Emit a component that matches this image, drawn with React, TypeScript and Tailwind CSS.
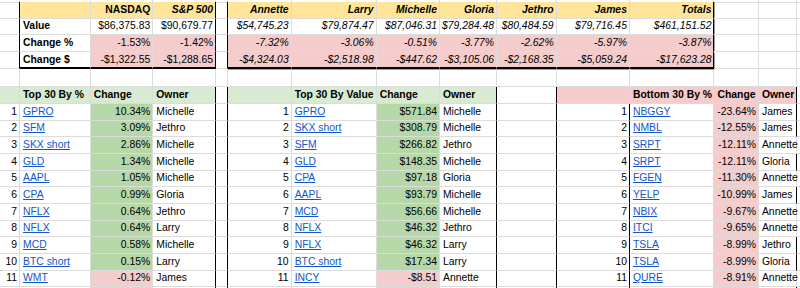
import clsx from "clsx";

type Cell = {
  t?: string;
  r?: boolean; // right aligned
  f?: "b" | "bi" | "i" | "a";
  bg?: string;
  R?: boolean; // black right edge
  B?: boolean; // black bottom edge
  thick?: boolean; // heavy bottom edge of the summary tables
  sh?: string; // drop shadow of the summary table
};

const YEL = "bg-[#ffe599]";
const PINK = "bg-[#f4cccc]";
const LGREEN = "bg-[#d9ead3]";
const GREEN = "bg-[#b6d7a8]";

const people = ["Annette", "Larry", "Michelle", "Gloria", "Jethro", "James", "Totals"];
const values = ["$54,745.23", "$79,874.47", "$87,046.31", "$79,284.48", "$80,484.59", "$79,716.45", "$461,151.52"];
const pcts = ["-7.32%", "-3.06%", "-0.51%", "-3.77%", "-2.62%", "-5.97%", "-3.87%"];
const dollars = ["-$4,324.03", "-$2,518.98", "-$447.62", "-$3,105.06", "-$2,168.35", "-$5,059.24", "-$17,623.28"];

const byPct = [
  ["GPRO", "10.34%", "Michelle"],
  ["SFM", "3.09%", "Jethro"],
  ["SKX short", "2.86%", "Michelle"],
  ["GLD", "1.34%", "Michelle"],
  ["AAPL", "1.05%", "Michelle"],
  ["CPA", "0.99%", "Gloria"],
  ["NFLX", "0.64%", "Jethro"],
  ["NFLX", "0.64%", "Larry"],
  ["MCD", "0.58%", "Michelle"],
  ["BTC short", "0.15%", "Larry"],
  ["WMT", "-0.12%", "James"],
];

const byValue = [
  ["GPRO", "$571.84", "Michelle"],
  ["SKX short", "$308.79", "Michelle"],
  ["SFM", "$266.82", "Jethro"],
  ["GLD", "$148.35", "Michelle"],
  ["CPA", "$97.18", "Gloria"],
  ["AAPL", "$93.79", "Michelle"],
  ["MCD", "$56.66", "Michelle"],
  ["NFLX", "$46.32", "Jethro"],
  ["NFLX", "$46.32", "Larry"],
  ["BTC short", "$17.34", "Larry"],
  ["INCY", "-$8.51", "Annette"],
];

const bottom = [
  ["NBGGY", "-23.64%", "James"],
  ["NMBL", "-12.55%", "James"],
  ["SRPT", "-12.11%", "Annette"],
  ["SRPT", "-12.11%", "Gloria"],
  ["FGEN", "-11.30%", "Annette"],
  ["YELP", "-10.99%", "James"],
  ["NBIX", "-9.67%", "Annette"],
  ["ITCI", "-9.65%", "Annette"],
  ["TSLA", "-8.99%", "Jethro"],
  ["TSLA", "-8.99%", "Gloria"],
  ["QURE", "-8.91%", "Annette"],
];

const blank = (): Cell[] => Array.from({ length: 15 }, () => ({}));

function topRow(label: Cell, nasdaq: Cell, sp: Cell, rest: Cell[], last = false): Cell[] {
  const row = blank();
  row[0] = { R: true };
  row[1] = { ...label, B: last, thick: last };
  row[2] = { ...nasdaq, r: true, B: last, thick: last };
  row[3] = { ...sp, r: true, R: true, B: last, thick: last };
  row[4] = { R: true };
  rest.forEach((c, i) => {
    const edge = i === 6;
    row[5 + i] = {
      ...c,
      r: true,
      B: last,
      thick: last,
      R: edge,
      sh: last
        ? edge
          ? "shadow-[1px_1px_0_#9e9e9e]"
          : "shadow-[0_1px_0_#9e9e9e]"
        : edge
          ? "shadow-[1px_0_0_#9e9e9e]"
          : undefined,
    };
  });
  return row;
}

function buildRows(): Cell[][] {
  const rows: Cell[][] = [];

  const r0 = blank();
  [1, 2, 3, 5, 6, 7, 8, 9, 10, 11].forEach((i) => (r0[i] = { B: true }));
  rows.push(r0);

  rows.push(
    topRow({ bg: YEL }, { t: "NASDAQ", f: "b", bg: YEL }, { t: "S&P 500", f: "bi", bg: YEL },
      people.map((p) => ({ t: p, f: "bi" as const, bg: YEL })))
  );
  rows.push(
    topRow({ t: "Value", f: "b" }, { t: "$86,375.83" }, { t: "$90,679.77" },
      values.map((v) => ({ t: v, f: "i" as const })))
  );
  rows.push(
    topRow({ t: "Change %", f: "b" }, { t: "-1.53%", bg: PINK }, { t: "-1.42%", bg: PINK },
      pcts.map((v) => ({ t: v, f: "i" as const, bg: PINK })))
  );
  rows.push(
    topRow({ t: "Change $", f: "b" }, { t: "-$1,322.55", bg: PINK }, { t: "-$1,288.65", bg: PINK },
      dollars.map((v) => ({ t: v, f: "i" as const, bg: PINK })), true)
  );
  rows.push(blank());

  // headers of the three lower tables
  const h = blank();
  h[0] = { bg: LGREEN };
  h[1] = { t: "Top 30 By %", f: "b", bg: LGREEN };
  h[2] = { t: "Change", f: "b", bg: LGREEN };
  h[3] = { t: "Owner", f: "b", bg: LGREEN, R: true };
  h[4] = { R: true };
  h[5] = { bg: LGREEN };
  h[6] = { t: "Top 30 By Value", f: "b", bg: LGREEN };
  h[7] = { t: "Change", f: "b", bg: LGREEN };
  h[8] = { t: "Owner", f: "b", bg: LGREEN, R: true };
  h[9] = { R: true };
  h[10] = { bg: PINK };
  h[11] = { t: "Bottom 30 By %", f: "b", bg: PINK };
  h[12] = { t: "Change", f: "b", bg: PINK };
  h[13] = { t: "Owner", f: "b", bg: PINK, R: true };
  rows.push(h);

  for (let i = 0; i < 11; i++) {
    const row = blank();
    const n = String(i + 1);
    const [t1, v1, o1] = byPct[i];
    const [t2, v2, o2] = byValue[i];
    const [t3, v3, o3] = bottom[i];
    row[0] = { t: n, r: true };
    row[1] = { t: t1, f: "a" };
    row[2] = { t: v1, r: true, bg: v1.startsWith("-") ? PINK : GREEN };
    row[3] = { t: o1, R: true };
    row[4] = { R: true };
    row[5] = { t: n, r: true };
    row[6] = { t: t2, f: "a" };
    row[7] = { t: v2, r: true, bg: v2.startsWith("-") ? PINK : GREEN };
    row[8] = { t: o2, R: true };
    row[9] = { R: true };
    row[10] = { t: n, r: true, R: true };
    row[11] = { t: t3, f: "a" };
    row[12] = { t: v3, r: true, bg: PINK };
    row[13] = { t: o3, R: o3 !== "Annette" };
    rows.push(row);
  }

  const tail = blank();
  [3, 4, 8, 9, 10, 13].forEach((i) => (tail[i] = { R: true }));
  tail[2] = { bg: PINK };
  tail[7] = { bg: PINK };
  tail[12] = { bg: PINK };
  rows.push(tail);

  return rows;
}

export default function App() {
  const rows = buildRows();
  return (
    <div className="w-[800px] h-[288px] overflow-hidden bg-white font-['Liberation_Sans',Arial,sans-serif] text-[10.4px] text-black">
      <div className="grid grid-cols-[20px_70.7px_62.6px_62.7px_12.3px_63.4px_85px_63.3px_57px_59.7px_73.3px_84.5px_44.5px_38px_40px] grid-rows-[2px_repeat(4,16.67px)_18.67px_repeat(13,16.67px)]">
        {rows.map((row, ri) =>
          row.map((c, ci) => (
            <div
              key={`${ri}-${ci}`}
              className={clsx(
                "flex items-end whitespace-nowrap border-r leading-[12px]",
                c.thick ? "border-b-2 pb-[1px]" : "border-b pb-[2px]",
                c.R ? "border-r-black" : "border-r-[#dcdcdc]",
                c.B ? "border-b-black" : "border-b-[#dcdcdc]",
                c.r ? "justify-end pr-[2px]" : "pl-[3px]",
                c.bg,
                c.sh,
                c.f === "b" && "font-bold",
                c.f === "bi" && "font-bold italic",
                c.f === "i" && "italic"
              )}
            >
              {c.t &&
                (c.f === "a" ? (
                  <span className="text-[#1155cc] underline">{c.t}</span>
                ) : (
                  <span>{c.t}</span>
                ))}
            </div>
          ))
        )}
      </div>
    </div>
  );
}
